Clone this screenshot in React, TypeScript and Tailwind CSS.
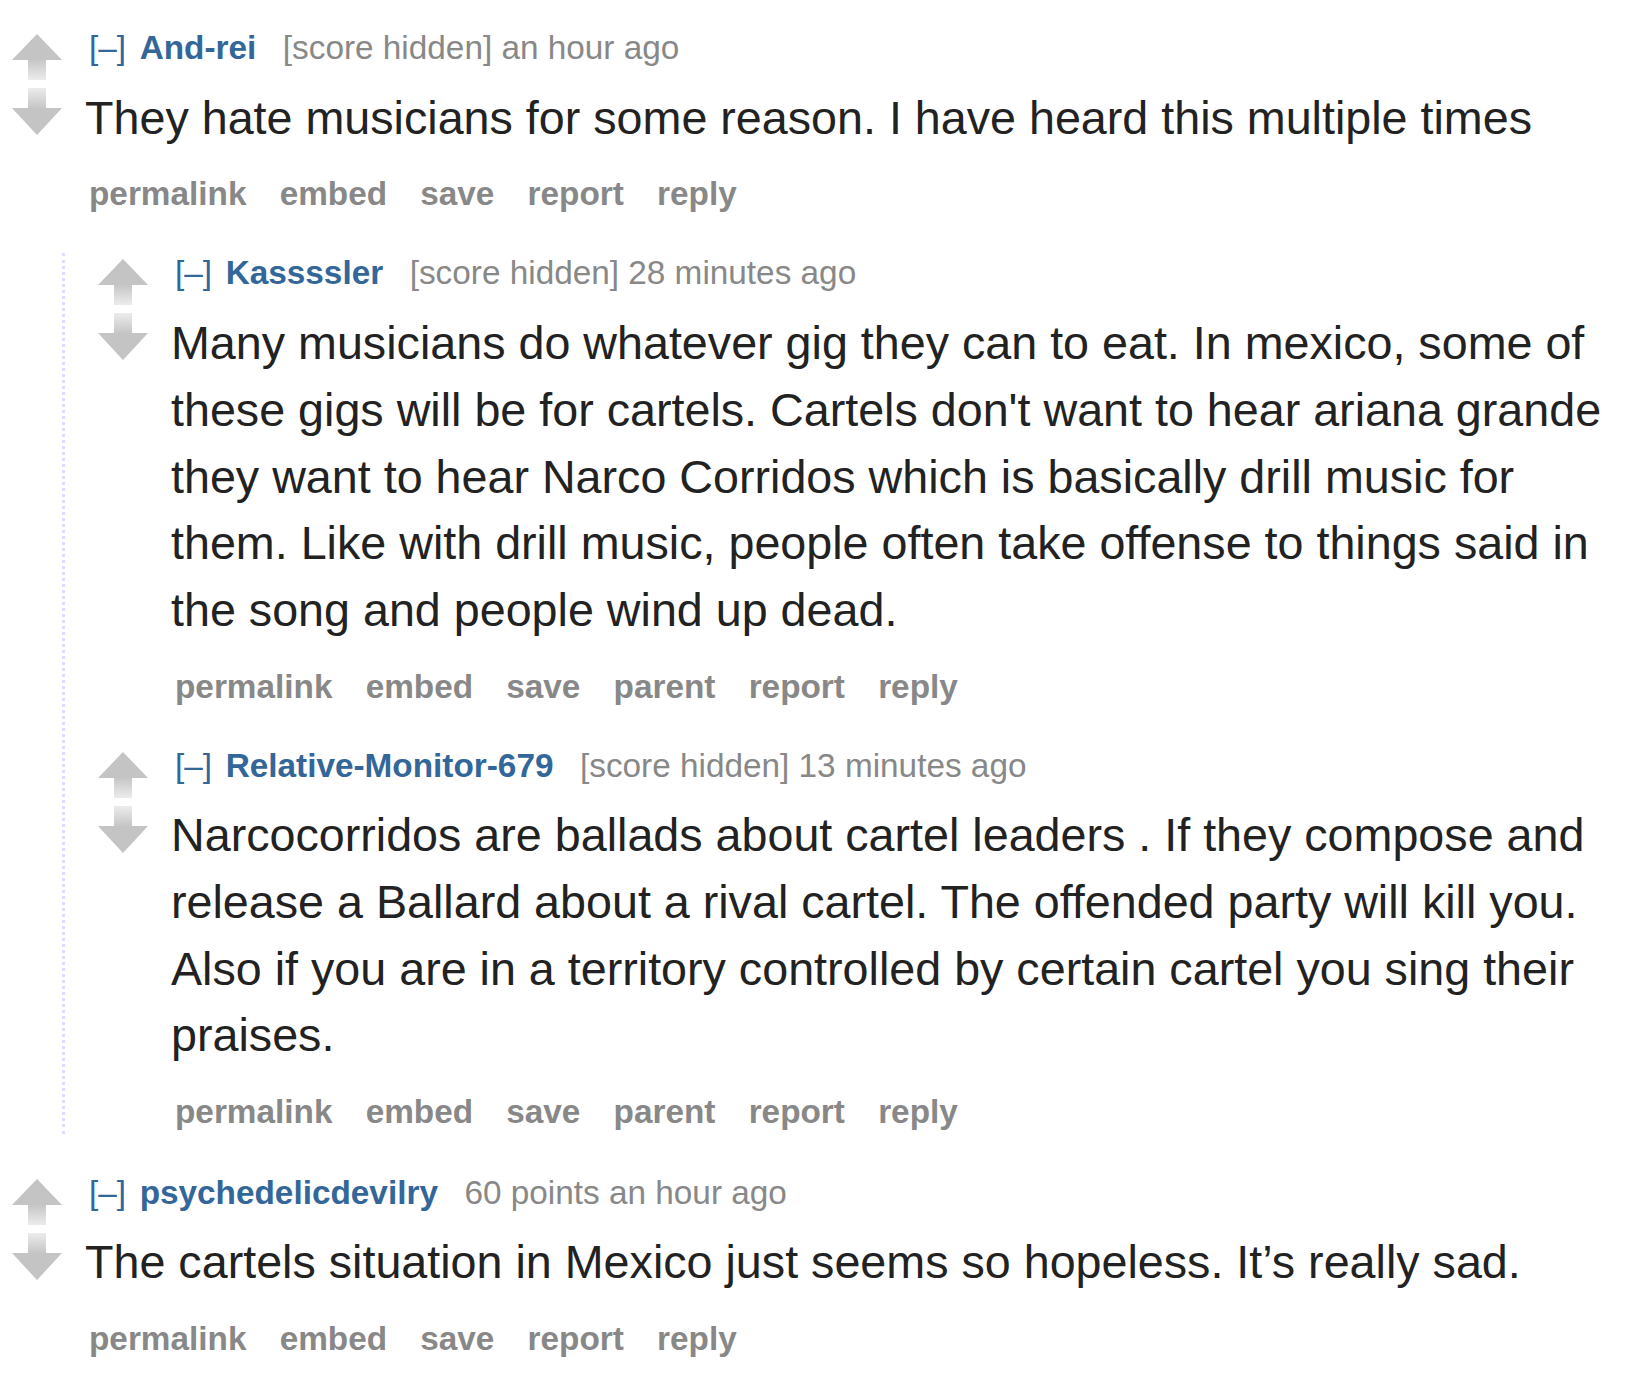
type CommentData = {
  author: string
  meta: string
  body: string
  hasParent?: boolean
  children?: CommentData[]
}

const comments: CommentData[] = [
  {
    author: 'And-rei',
    meta: '[score hidden] an hour ago',
    body: 'They hate musicians for some reason. I have heard this multiple times',
    children: [
      {
        author: 'Kassssler',
        meta: '[score hidden] 28 minutes ago',
        hasParent: true,
        body: "Many musicians do whatever gig they can to eat. In mexico, some of these gigs will be for cartels. Cartels don't want to hear ariana grande they want to hear Narco Corridos which is basically drill music for them. Like with drill music, people often take offense to things said in the song and people wind up dead.",
      },
      {
        author: 'Relative-Monitor-679',
        meta: '[score hidden] 13 minutes ago',
        hasParent: true,
        body: 'Narcocorridos are ballads about cartel leaders . If they compose and release a Ballard about a rival cartel. The offended party will kill you. Also if you are in a territory controlled by certain cartel you sing their praises.',
      },
    ],
  },
  {
    author: 'psychedelicdevilry',
    meta: '60 points an hour ago',
    body: 'The cartels situation in Mexico just seems so hopeless. It’s really sad.',
  },
]

function UpArrow() {
  return (
    <svg width="50" height="46" viewBox="0 0 50 46" className="block">
      <defs>
        <linearGradient id="upStem" x1="0" y1="0" x2="0" y2="1">
          <stop offset="0" stopColor="#c4c4c4" />
          <stop offset="1" stopColor="#ececec" />
        </linearGradient>
      </defs>
      <rect x="16" y="25" width="18" height="21" fill="url(#upStem)" />
      <polygon points="25,0 50,26 0,26" fill="#c4c4c4" />
    </svg>
  )
}

function DownArrow() {
  return (
    <svg width="50" height="47" viewBox="0 0 50 47" className="block">
      <defs>
        <linearGradient id="downStem" x1="0" y1="0" x2="0" y2="1">
          <stop offset="0" stopColor="#ececec" />
          <stop offset="1" stopColor="#c4c4c4" />
        </linearGradient>
      </defs>
      <rect x="16" y="0" width="18" height="21" fill="url(#downStem)" />
      <polygon points="0,20 50,20 25,47" fill="#c4c4c4" />
    </svg>
  )
}

function Comment({ comment, nested = false }: { comment: CommentData; nested?: boolean }) {
  const actions = comment.hasParent
    ? ['permalink', 'embed', 'save', 'parent', 'report', 'reply']
    : ['permalink', 'embed', 'save', 'report', 'reply']

  return (
    <div>
      <div className="flex">
        {/* Vote arrows */}
        <div className={`${nested ? 'ml-[33px]' : 'ml-[12px]'} mt-[6px] flex w-[50px] shrink-0 flex-col gap-[8px]`}>
          <UpArrow />
          <DownArrow />
        </div>

        <div className="ml-[27px] min-w-0 flex-1">
          {/* Tagline */}
          <div className="flex h-[40px] items-center whitespace-nowrap text-[33.33px] leading-[40px]">
            <span className="mr-[13.6px] text-[#336699]">[–]</span>
            <span className="mr-[26.5px] font-bold text-[#336699]">{comment.author}</span>
            <span className="text-[#888888]">{comment.meta}</span>
          </div>

          {/* Body */}
          <p className="-ml-[4px] mt-[16.8px] text-[46.67px] leading-[66.67px] text-[#222222]">{comment.body}</p>

          {/* Buttons */}
          <ul className="mt-[23.1px] flex h-[40px] items-center gap-[33.2px] text-[33.33px] font-bold leading-[40px] text-[#888888]">
            {actions.map((a) => (
              <li key={a}>{a}</li>
            ))}
          </ul>
        </div>
      </div>

      {comment.children && (
        <div className="ml-[62px] mt-[39px] border-l-[3px] border-dotted border-[#ddddff] pb-[2px]">
          {comment.children.map((child, i) => (
            <div key={child.author} className={i > 0 ? 'mt-[39px]' : ''}>
              <Comment comment={child} nested />
            </div>
          ))}
        </div>
      )}
    </div>
  )
}

export default function App() {
  return (
    <div className="min-h-screen bg-white pr-[28px] pt-[27.8px] font-['Liberation_Sans',Arial,sans-serif]">
      {comments.map((c, i) => (
        <div key={c.author} className={i > 0 ? 'mt-[38.5px]' : ''}>
          <Comment comment={c} />
        </div>
      ))}
    </div>
  )
}
